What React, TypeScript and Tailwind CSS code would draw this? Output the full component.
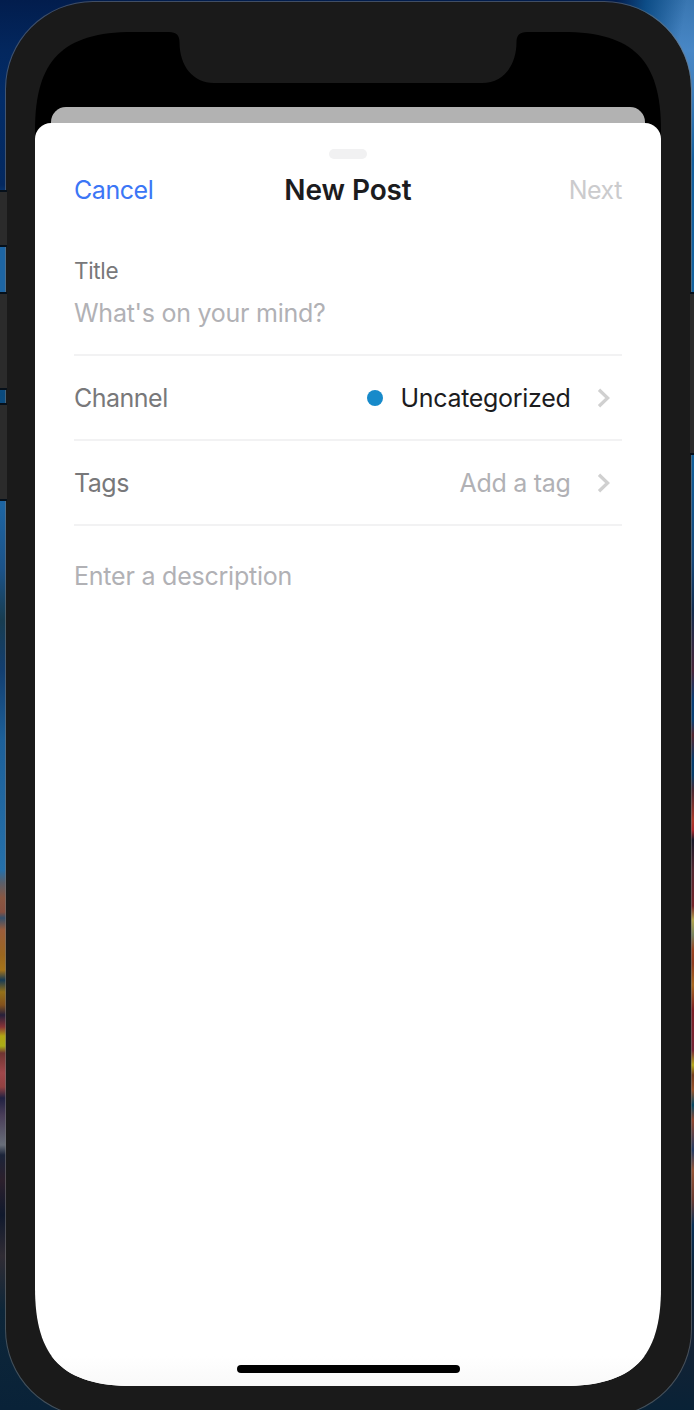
import type { ReactNode } from "react";

function Wallpaper() {
  return (
    <div aria-hidden className="absolute inset-0 -z-10 grid grid-cols-2">
      <div className="bg-[linear-gradient(180deg,#021d4d_0px,#03275e_50px,#022c68_100px,#03285f_185px,#1d65a3_220px,#1d65a3_300px,#0a4a7d_395px,#1d65a3_505px,#1b5288_570px,#173c50_620px,#123e70_670px,#1c609a_740px,#2570aa_870px,#57606d_882px,#8a5741_898px,#875040_912px,#35506c_918px,#9b5d3b_930px,#9b671f_955px,#a67419_970px,#163b56_980px,#947018_992px,#83511c_1005px,#26203b_1015px,#8b3436_1027px,#b2a514_1036px,#a9ae16_1046px,#703532_1053px,#a0474b_1073px,#924141_1087px,#202142_1098px,#493d58_1115px,#686e79_1145px,#1b2439_1155px,#2c202c_1180px,#10192d_1215px,#302c34_1256px,#0d2639_1310px,#092238_1410px)]" />
      <div className="relative bg-[linear-gradient(180deg,#3976b1_0px,#4887c6_50px,#4080bd_90px,#145f9e_160px,#12629f_280px,#115f9a_465px,#16487a_560px,#122d50_610px,#49263a_670px,#083f78_700px,#094176_720px,#55262e_735px,#063d70_760px,#073e6b_775px,#482a34_790px,#ac3b2b_820px,#ac292d_830px,#19192a_840px,#532831_870px,#75252a_906px,#b3a54d_920px,#788460_935px,#9b4522_950px,#8f3d22_963px,#a86821_985px,#7c2026_1010px,#762638_1050px,#b5aa1c_1065px,#753e20_1075px,#98542b_1090px,#064a66_1105px,#90482f_1120px,#253c65_1150px,#955637_1170px,#693b33_1200px,#0a3158_1225px,#0c243b_1270px,#142235_1340px,#092236_1410px)]">
        <div className="h-[60px] bg-[linear-gradient(100deg,#021d4d_0px,#021d4d_265px,#0d4d87_295px,#3976b100_335px)]" />
      </div>
    </div>
  );
}

function SideButton({ className }: { className: string }) {
  return (
    <div
      className={`shrink-0 border-y-2 border-[#06101a] bg-[#2b2b2b] ${className}`}
    />
  );
}

function Chevron() {
  return (
    <svg width="14" height="20" viewBox="0 0 14 20" fill="none" aria-hidden>
      <path d="M2 1.8 10.6 10 2 18.2" stroke="#d0d0d0" strokeWidth="3.3" />
    </svg>
  );
}

function Row({ label, children }: { label: string; children: ReactNode }) {
  return (
    <div className="flex h-[85px] items-center justify-between border-b-2 border-[#f2f2f3] pr-[11px]">
      <span className="tracking-[-0.5px] text-[#78787a]">{label}</span>
      <div className="flex items-center">{children}</div>
    </div>
  );
}

function Sheet() {
  return (
    <div className="flex min-h-0 flex-1 flex-col rounded-t-[16px] bg-white px-[39px] pt-[26px] text-[25px] leading-[30px] text-[#1c1c1e]">
      <div className="h-[10px] w-[38px] shrink-0 self-center rounded-full bg-[#f1f1f2]" />
      <header className="mt-[16px] grid h-[30px] grid-cols-[1fr_auto_1fr] items-center">
        <button className="justify-self-start tracking-[-0.45px] text-[#3b76f6]">Cancel</button>
        <h1 className="text-[28px] font-semibold tracking-[-0.1px]">New Post</h1>
        <button className="justify-self-end tracking-[-0.45px] text-[#cbcbcd]">Next</button>
      </header>
      <div className="mt-[51px] h-[100px] shrink-0 border-b-2 border-[#f2f2f3]">
        <div className="h-[42px] text-[22.5px] tracking-[-0.35px] text-[#78787a]">Title</div>
        <div className="tracking-[-0.26px] text-[#b1b1b5]">What's on your mind?</div>
      </div>
      <Row label="Channel">
        <span className="mr-[17.5px] size-[16px] rounded-full bg-[#178aca]" />
        <span className="mr-[26.5px] tracking-[-0.3px]">Uncategorized</span>
        <Chevron />
      </Row>
      <Row label="Tags">
        <span className="mr-[26.5px] tracking-[-0.3px] text-[#b1b1b5]">Add a tag</span>
        <Chevron />
      </Row>
      <div className="mt-[35px] tracking-[-0.22px] text-[#b1b1b5]">Enter a description</div>
      <div className="-mx-[39px] mt-auto flex h-[30px] items-start justify-center bg-linear-to-b from-white to-[#f9f9f9] pt-[9px]">
        <div className="ml-px h-[8px] w-[223px] rounded-full bg-black" />
      </div>
    </div>
  );
}

export default function App() {
  return (
    <div className="relative isolate flex h-[1410px] w-[694px] overflow-hidden font-['Inter','Liberation_Sans',sans-serif]">
      <Wallpaper />
      <div className="relative z-10 flex w-[5px] shrink-0 flex-col pt-[190px]">
        <SideButton className="h-[57px] w-[7px]" />
        <SideButton className="mt-[45px] h-[98px] w-[7px]" />
        <SideButton className="mt-[13px] h-[98px] w-[7px]" />
      </div>
      <div className="mt-px flex h-[1416px] w-[687px] shrink-0 flex-col rounded-[88px] border border-[#777777]/55 bg-[#1a1a1a] bg-clip-padding pl-[29px] pt-[30px]">
        <main className="flex h-[1354px] w-[626px] shrink-0 flex-col bg-black [clip-path:path('M98_0H528C598_0_626_28_626_98V1256C626_1326_598_1354_528_1354H98C28_1354_0_1326_0_1256V98C0_28_28_0_98_0Z')]">
          <div className="flex h-[75.4px] shrink-0 justify-center">
            <div className="h-[51px] w-[358px] bg-[#1a1a1a] [clip-path:path('M0_0H358C350.5_0_347.5_3.5_347.5_10C347.5_34_334_51_313_51H45C24_51_10.5_34_10.5_10C10.5_3.5_7.5_0_0_0Z')]" />
          </div>
          <div className="mx-[16px] -mb-[16px] h-[32px] shrink-0 rounded-t-[15px] bg-[#b2b2b2]" />
          <Sheet />
        </main>
      </div>
      <div className="-ml-[2px] flex w-[4px] shrink-0 flex-col pt-[292px]">
        <SideButton className="h-[163px] w-[4px]" />
      </div>
    </div>
  );
}
